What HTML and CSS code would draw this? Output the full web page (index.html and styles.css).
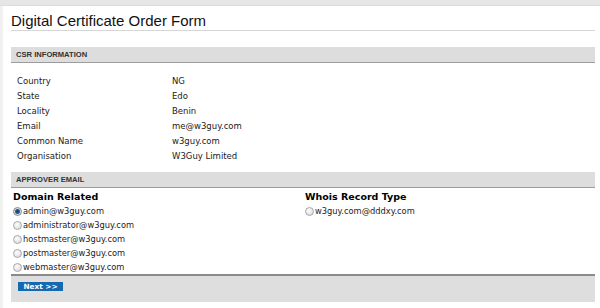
FILE: index.html
```html
<!DOCTYPE html>
<html>
<head>
    <title>Digital Certificate Order Form</title>
    <link rel="stylesheet" href="styles.css">
</head>
<body>
    <div class="topbar"></div>
    <div class="page">
        <h1 class="title">Digital Certificate Order Form</h1>

        <div class="section-head">CSR Information</div>
        <div class="info">
            <span>Country</span><span>NG</span>
            <span>State</span><span>Edo</span>
            <span>Locality</span><span>Benin</span>
            <span>Email</span><span>me@w3guy.com</span>
            <span>Common Name</span><span>w3guy.com</span>
            <span>Organisation</span><span>W3Guy Limited</span>
        </div>

        <div class="section-head">Approver Email</div>
        <div class="approver">
            <div class="col">
                <h3>Domain Related</h3>
                <label class="opt"><input type="radio" name="approver" checked>admin@w3guy.com</label>
                <label class="opt"><input type="radio" name="approver">administrator@w3guy.com</label>
                <label class="opt"><input type="radio" name="approver">hostmaster@w3guy.com</label>
                <label class="opt"><input type="radio" name="approver">postmaster@w3guy.com</label>
                <label class="opt"><input type="radio" name="approver">webmaster@w3guy.com</label>
            </div>
            <div class="col">
                <h3>Whois Record Type</h3>
                <label class="opt"><input type="radio" name="approver">w3guy.com@dddxy.com</label>
            </div>
        </div>

        <div class="actions">
            <button type="button" class="next">Next &gt;&gt;</button>
        </div>
    </div>
</body>
</html>
```

FILE: styles.css
```css
body {
    margin: 0;
    background-color: #f1f1f1;
    font-family: "DejaVu Sans", Verdana, sans-serif;
    color: #222;
}

.topbar {
    height: 5px;
    background-color: #e6e6e6;
    border-bottom: 1px solid #dcdcdc;
}

.page {
    margin-left: 3px;
    padding: 6px 5px 6px 8px;
    background-color: #fff;
}

.title {
    margin: 0;
    font-family: "Liberation Sans", Arial, sans-serif;
    font-size: 15px;
    font-weight: normal;
    line-height: 18px;
    color: #111;
    border-bottom: 1px solid #d6d6d6;
}

.section-head {
    margin-top: 16px;
    height: 15px;
    padding-left: 5px;
    background-color: #dddddd;
    border-bottom: 1px solid #9c9c9c;
    font-family: "Liberation Sans", Arial, sans-serif;
    font-size: 7.6px;
    font-weight: bold;
    line-height: 15px;
    text-transform: uppercase;
    color: #333;
}

.info {
    display: grid;
    grid-template-columns: 155px auto;
    grid-auto-rows: 15px;
    align-items: center;
    margin: 10px 0 -7px;
    padding-left: 6px;
    font-size: 8.5px;
}

.approver {
    display: grid;
    grid-template-columns: 292px 1fr;
    padding-left: 2px;
}

.approver h3 {
    margin: 0;
    height: 14px;
    padding-top: 2px;
    font-size: 9.5px;
    line-height: 13px;
    color: #000;
}

.opt {
    display: flex;
    align-items: center;
    height: 14px;
    font-size: 8.3px;
}

.opt input {
    appearance: none;
    -webkit-appearance: none;
    width: 9px;
    height: 9px;
    margin: 0 1px 0 0;
    border: 1px solid #a8a8a8;
    border-radius: 50%;
    background: radial-gradient(circle at 40% 35%, #fdfdfd, #d6d6d6);
    box-sizing: border-box;
}

.opt input:checked {
    background: radial-gradient(circle, #1d3d66 0, #2f5a8c 2px, #d9dfe6 3px, #f4f4f4 4px);
    border-color: #7a8592;
}

.actions {
    height: 20px;
    padding: 6px 0 0 7px;
    background-color: #dedede;
    border-top: 2px solid #8a8a8a;
}

.next {
    display: block;
    height: 9px;
    padding: 0 5.5px;
    border: none;
    background-color: #1469b1;
    color: #fff;
    font-family: "DejaVu Sans", Verdana, sans-serif;
    font-size: 7.3px;
    font-weight: bold;
    line-height: 9px;
    cursor: pointer;
}
```
